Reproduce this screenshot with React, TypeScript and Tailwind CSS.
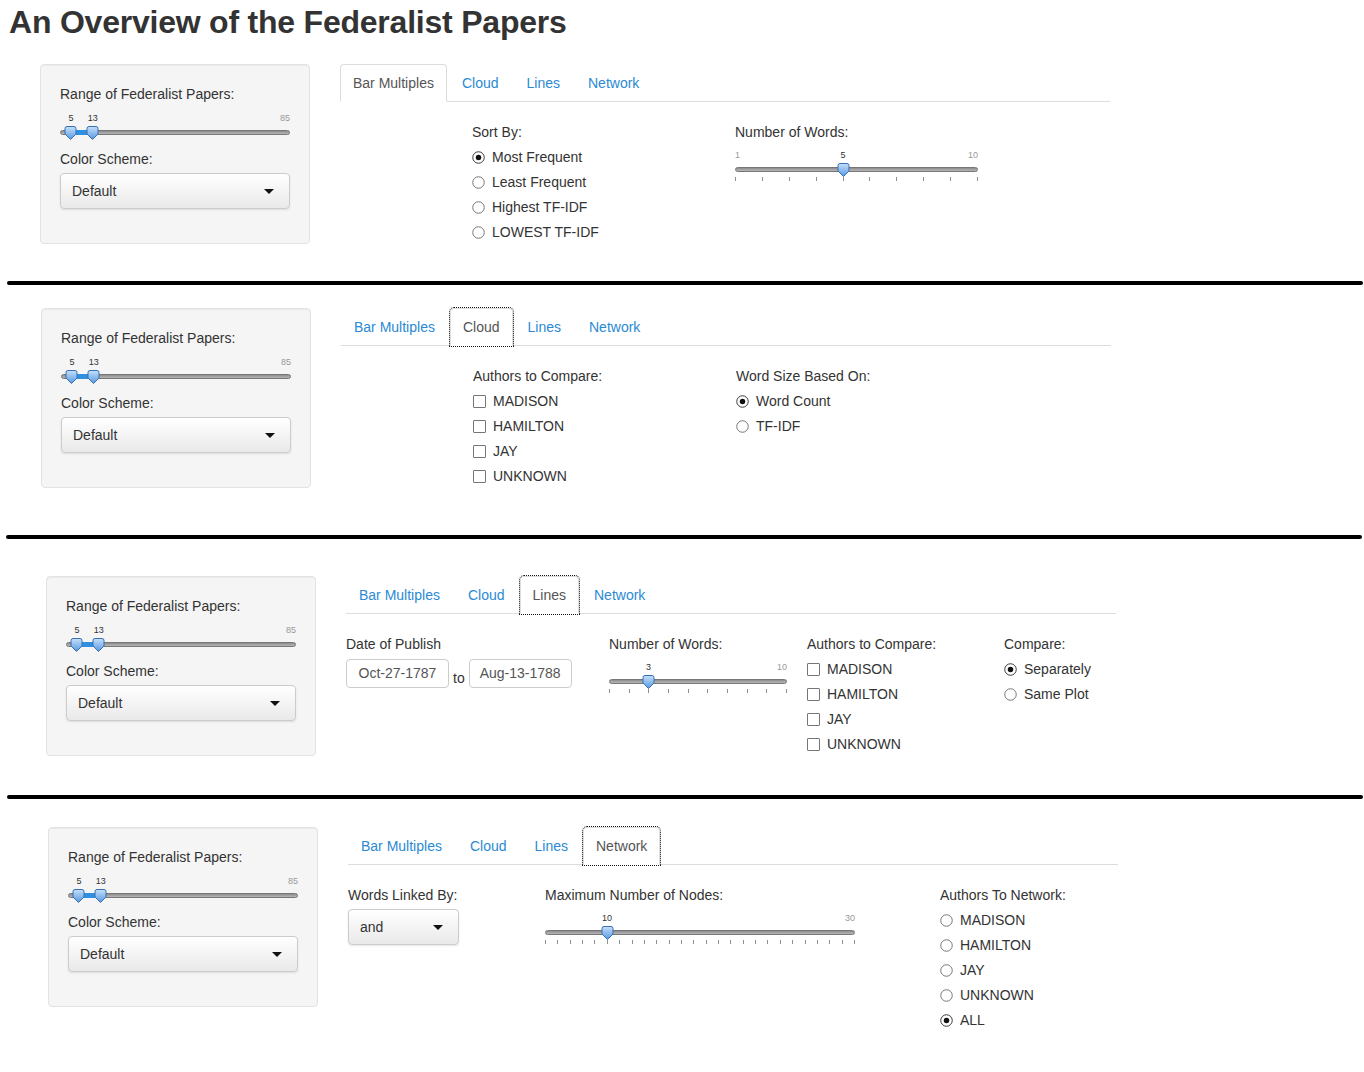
import React from "react";

const TABS = ["Bar Multiples", "Cloud", "Lines", "Network"];
const AUTHORS = ["MADISON", "HAMILTON", "JAY", "UNKNOWN"];

function Label({ children }: { children: React.ReactNode }) {
  return <div className="text-[14px] leading-[20px] text-[#333]">{children}</div>;
}

function RadioIcon({ checked }: { checked?: boolean }) {
  return (
    <svg width="13" height="13" viewBox="0 0 13 13" className="shrink-0">
      <circle cx="6.5" cy="6.5" r="5.75" fill="white" stroke={checked ? "#3a3a3a" : "#767676"} strokeWidth="1" />
      {checked && <circle cx="6.5" cy="6.5" r="2.75" fill="#111" />}
    </svg>
  );
}

function Choices({ items, checked, box }: { items: string[]; checked?: string; box?: boolean }) {
  return (
    <div className="mt-[5px] flex flex-col gap-[5px]">
      {items.map((it) => (
        <div key={it} className="flex h-[20px] items-center gap-[7px] text-[14px] text-[#333]">
          {box ? (
            <span className="h-[13px] w-[13px] shrink-0 rounded-[1px] border border-[#767676] bg-white" />
          ) : (
            <RadioIcon checked={it === checked} />
          )}
          <span>{it}</span>
        </div>
      ))}
    </div>
  );
}

function Handle({ left }: { left: number }) {
  return (
    <svg width="13" height="14" viewBox="0 0 13 14" className="absolute top-[13px]" style={{ left: left - 6.5 }}>
      <defs>
        <linearGradient id="hg" x1="0" y1="0" x2="0" y2="1">
          <stop offset="0" stopColor="#c6e0fb" />
          <stop offset="1" stopColor="#5598e0" />
        </linearGradient>
      </defs>
      <path d="M1 2.5Q1 0.5 3 0.5H10Q12 0.5 12 2.5V8L6.5 13.5L1 8Z" fill="url(#hg)" stroke="#376fb2" />
    </svg>
  );
}

function Slider({
  width,
  w,
  h,
  min,
  max,
  values,
  showMin,
  ticks,
}: {
  width: number;
  w: string;
  h: string;
  min: number;
  max: number;
  values: number[];
  showMin?: boolean;
  ticks?: number;
}) {
  const pos = (v: number) => ((v - min) / (max - min)) * width;
  return (
    <div className={`relative ${w} ${h}`}>
      {showMin && <span className="absolute left-0 top-0 text-[9px] leading-[10px] text-[#999]">{min}</span>}
      <span className="absolute right-0 top-0 text-[9px] leading-[10px] text-[#999]">{max}</span>
      {values.map((v) => (
        <span
          key={v}
          className="absolute top-0 -translate-x-1/2 text-[9px] leading-[10px] text-[#333]"
          style={{ left: pos(v) }}
        >
          {v}
        </span>
      ))}
      <div className="absolute left-0 right-0 top-[17px] h-[5px] rounded-full border border-[#777] bg-gradient-to-b from-[#8c8c8c] to-[#b8b8b8]" />
      {values.length === 2 && (
        <div
          className="absolute top-[17px] h-[5px] bg-[#2f8fe0]"
          style={{ left: pos(values[0]), width: pos(values[1]) - pos(values[0]) }}
        />
      )}
      {ticks && (
        <div className="absolute left-0 right-0 top-[27px] flex justify-between">
          {Array.from({ length: ticks }).map((_, i) => (
            <div key={i} className="h-[4px] w-px bg-[#8f8f8f]" />
          ))}
        </div>
      )}
      {values.map((v) => (
        <Handle key={v} left={pos(v)} />
      ))}
    </div>
  );
}

function Select({ text, w }: { text: string; w: string }) {
  return (
    <div
      className={`mt-[4px] flex h-[36px] ${w} items-center justify-between rounded-[4px] border border-[#ccc] bg-gradient-to-b from-white to-[#e9e9e9] pl-[11px] pr-[15px] text-[14px] text-[#333] shadow-[0_1px_2px_rgba(0,0,0,0.1)]`}
    >
      <span>{text}</span>
      <svg width="10" height="5" viewBox="0 0 10 5">
        <path d="M0 0H10L5 5Z" fill="#111" />
      </svg>
    </div>
  );
}

function Sidebar() {
  return (
    <div className="h-[180px] w-[270px] shrink-0 rounded-[4px] border border-[#e3e3e3] bg-[#f5f5f5] px-[19px] pt-[19px] shadow-[inset_0_1px_1px_rgba(0,0,0,0.05)]">
      <Label>Range of Federalist Papers:</Label>
      <div className="mt-[9px]">
        <Slider width={230} w="w-[230px]" h="h-[28px]" min={1} max={85} values={[5, 13]} />
      </div>
      <div className="mt-[8px]">
        <Label>Color Scheme:</Label>
      </div>
      <Select text="Default" w="w-[230px]" />
    </div>
  );
}

function Tabs({ active, focus }: { active: string; focus?: boolean }) {
  return (
    <ul className="flex w-[770px] border-b border-[#ddd]">
      {TABS.map((t) => {
        const on = t === active;
        return (
          <li key={t} className="-mb-px mr-[2px]">
            <a
              className={`block rounded-t-[4px] border px-[12px] py-[8px] text-[14px] leading-[20px] ${
                on ? "border-[#ddd] border-b-transparent bg-white text-[#555]" : "border-transparent text-[#2b8ad3]"
              } ${on && focus ? "outline-1 outline-dotted outline-[#111]" : ""}`}
            >
              {t}
            </a>
          </li>
        );
      })}
    </ul>
  );
}

function Section({
  ml,
  mt,
  active,
  focus,
  children,
}: {
  ml: string;
  mt: string;
  active: string;
  focus?: boolean;
  children: React.ReactNode;
}) {
  return (
    <div className={`flex ${ml} ${mt}`}>
      <Sidebar />
      <div className="ml-[30px] w-[770px]">
        <Tabs active={active} focus={focus} />
        <div className="flex pt-[20px]">{children}</div>
      </div>
    </div>
  );
}

function DateBox({ text }: { text: string }) {
  return (
    <div className="flex h-[29px] w-[103px] items-center justify-center rounded-[4px] border border-[#ccc] bg-white text-[14px] text-[#555]">
      {text}
    </div>
  );
}

export default function App() {
  return (
    <div className="min-h-screen w-[1364px] bg-white font-['Liberation_Sans',Arial,sans-serif] text-[#333]">
      <h1 className="pl-[9px] pt-[4px] text-[32px] font-bold leading-[36px] tracking-[-0.22px] text-[#333]">
        An Overview of the Federalist Papers
      </h1>

      {/* Bar Multiples */}
      <Section ml="ml-[40px]" mt="mt-[24px]" active="Bar Multiples">
        <div className="w-[132px]" />
        <div className="w-[263px]">
          <Label>Sort By:</Label>
          <Choices
            items={["Most Frequent", "Least Frequent", "Highest TF-IDF", "LOWEST TF-IDF"]}
            checked="Most Frequent"
          />
        </div>
        <div>
          <Label>Number of Words:</Label>
          <div className="mt-[8px]">
            <Slider width={243} w="w-[243px]" h="h-[32px]" min={1} max={10} values={[5]} showMin ticks={10} />
          </div>
        </div>
      </Section>

      <div className="ml-[7px] mr-[1px] mt-[37px] h-[4px] rounded-full bg-black" />

      {/* Cloud */}
      <Section ml="ml-[41px]" mt="mt-[23px]" active="Cloud" focus>
        <div className="w-[132px]" />
        <div className="w-[263px]">
          <Label>Authors to Compare:</Label>
          <Choices items={AUTHORS} box />
        </div>
        <div>
          <Label>Word Size Based On:</Label>
          <Choices items={["Word Count", "TF-IDF"]} checked="Word Count" />
        </div>
      </Section>

      <div className="ml-[6px] mr-[2px] mt-[47px] h-[4px] rounded-full bg-black" />

      {/* Lines */}
      <Section ml="ml-[46px]" mt="mt-[37px]" active="Lines" focus>
        <div className="w-[263px]">
          <Label>Date of Publish</Label>
          <div className="mt-[5px] flex items-start">
            <DateBox text="Oct-27-1787" />
            <span className="mt-[9px] px-[4px] text-[14px] leading-[20px]">to</span>
            <DateBox text="Aug-13-1788" />
          </div>
        </div>
        <div className="w-[198px]">
          <Label>Number of Words:</Label>
          <div className="mt-[8px]">
            <Slider width={178} w="w-[178px]" h="h-[32px]" min={1} max={10} values={[3]} ticks={10} />
          </div>
        </div>
        <div className="w-[197px]">
          <Label>Authors to Compare:</Label>
          <Choices items={AUTHORS} box />
        </div>
        <div>
          <Label>Compare:</Label>
          <Choices items={["Separately", "Same Plot"]} checked="Separately" />
        </div>
      </Section>

      <div className="ml-[7px] mr-[1px] mt-[39px] h-[4px] rounded-full bg-black" />

      {/* Network */}
      <Section ml="ml-[48px]" mt="mt-[28px]" active="Network" focus>
        <div className="w-[197px]">
          <Label>Words Linked By:</Label>
          <Select text="and" w="w-[111px]" />
        </div>
        <div className="w-[395px]">
          <Label>Maximum Number of Nodes:</Label>
          <div className="mt-[8px]">
            <Slider width={310} w="w-[310px]" h="h-[32px]" min={5} max={30} values={[10]} ticks={26} />
          </div>
        </div>
        <div>
          <Label>Authors To Network:</Label>
          <Choices items={[...AUTHORS, "ALL"]} checked="ALL" />
        </div>
      </Section>
      <div className="h-[40px]" />
    </div>
  );
}
